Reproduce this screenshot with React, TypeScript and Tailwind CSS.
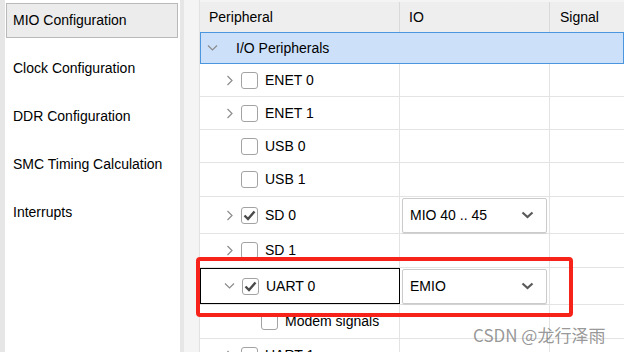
import React from "react";

const font = { fontFamily: '"Liberation Sans", Arial, sans-serif' };

function ChevronRight() {
  return (
    <svg width="8" height="11" viewBox="0 0 8 11" className="shrink-0">
      <path d="M1.5 1 L6 5.5 L1.5 10" fill="none" stroke="#8c8c8c" strokeWidth="1.2" />
    </svg>
  );
}

function ChevronDownThin() {
  return (
    <svg width="11" height="8" viewBox="0 0 11 8" className="shrink-0">
      <path d="M1 1.5 L5.5 6 L10 1.5" fill="none" stroke="#8c8c8c" strokeWidth="1.2" />
    </svg>
  );
}

function Checkbox({ checked }: { checked?: boolean }) {
  return (
    <div className="w-[17px] h-[17px] shrink-0 rounded-[3px] border-[1.5px] border-[#a3a3a3] bg-white flex items-center justify-center">
      {checked && (
        <svg width="13" height="11" viewBox="0 0 13 11">
          <path d="M1.5 5.5 L5 9 L11.5 1.5" fill="none" stroke="#4a4a4a" strokeWidth="2.4" />
        </svg>
      )}
    </div>
  );
}

function Combo({ text }: { text: string }) {
  return (
    <div className="mx-[2px] w-[145px] h-[35px] border-[1.5px] border-[#cbcbcb] rounded-[2px] bg-white flex items-center justify-between pl-[7px] pr-[12px] shadow-[0_1px_1px_rgba(0,0,0,0.08)]">
      <span className="text-[14px] text-black">{text}</span>
      <svg width="13" height="8" viewBox="0 0 13 8">
        <path d="M1.5 1.5 L6.5 6 L11.5 1.5" fill="none" stroke="#5a5a5a" strokeWidth="2.2" />
      </svg>
    </div>
  );
}

type RowProps = {
  h: string;
  indent: "top" | "sub";
  chevron?: "right" | "down" | "none";
  checked?: boolean;
  label: string;
  combo?: string;
  selected?: boolean;
};

function Row({ h, indent, chevron = "none", checked, label, combo, selected }: RowProps) {
  return (
    <div className={`flex ${h} border-b border-[#e3e3e3]`}>
      <div
        className={`w-[200px] shrink-0 flex items-center border-r ${
          selected ? "border border-black" : "border-[#e3e3e3]"
        }`}
      >
        <div className={`${indent === "top" ? "w-[41px]" : "w-[61px]"} shrink-0 flex justify-end pr-[7px]`}>
          {chevron === "right" && <ChevronRight />}
          {chevron === "down" && <ChevronDownThin />}
        </div>
        <Checkbox checked={checked} />
        <span className="ml-[7px] text-[14px] text-black whitespace-nowrap">{label}</span>
      </div>
      <div className="w-[150px] shrink-0 flex items-center border-r border-[#e3e3e3]">
        {combo && <Combo text={combo} />}
      </div>
      <div className="flex-1" />
    </div>
  );
}

export default function App() {
  const items = ["Clock Configuration", "DDR Configuration", "SMC Timing Calculation", "Interrupts"];
  return (
    <div className="relative w-[624px] h-[352px] overflow-hidden flex bg-[#f4f4f4]" style={font}>
      {/* left nav */}
      <div className="w-[184px] h-full shrink-0 bg-[#e6e6e6] pl-[5px] pr-[4px]">
        <div className="h-full bg-white pt-[3px] flex flex-col gap-[13px]">
          <div className="ml-[1px] w-[172px] h-[35px] bg-[#ececec] border border-[#b9b9b9] flex items-center pl-[6px] text-[14px] text-black">
            MIO Configuration
          </div>
          {items.map((t) => (
            <div key={t} className="h-[35px] flex items-center pl-[8px] text-[14px] text-black">
              {t}
            </div>
          ))}
        </div>
      </div>
      {/* gap */}
      <div className="w-[16px] h-full shrink-0 bg-[#f4f4f4] border-r border-[#e2e2e2]" />
      {/* table */}
      <div className="flex-1 h-full bg-white pt-[2px] bg-gradient-to-b from-[#f4f4f4] to-[#f4f4f4] bg-no-repeat bg-[length:100%_2px]">
        <div className="flex h-[30px] bg-[#eeeeee]">
          <div className="w-[200px] shrink-0 flex items-center pl-[9px] border-r border-[#dadada] text-[14px] text-black">
            Peripheral
          </div>
          <div className="w-[150px] shrink-0 flex items-center pl-[9px] border-r border-[#dadada] text-[14px] text-black">
            IO
          </div>
          <div className="flex-1 flex items-center pl-[10px] text-[14px] text-black">Signal</div>
        </div>
        <div className="flex h-[32px] bg-[#cce0fa] border border-[#4a97e0] items-center">
          <div className="w-[35px] shrink-0 flex justify-start pl-[6px]">
            <ChevronDownThin />
          </div>
          <span className="text-[14px] text-black">I/O Peripherals</span>
        </div>
        <Row h="h-[33px]" indent="top" chevron="right" label="ENET 0" />
        <Row h="h-[33px]" indent="top" chevron="right" label="ENET 1" />
        <Row h="h-[33px]" indent="top" label="USB 0" />
        <Row h="h-[34px]" indent="top" label="USB 1" />
        <Row h="h-[37px]" indent="top" chevron="right" checked label="SD 0" combo="MIO 40 .. 45" />
        <Row h="h-[34px]" indent="top" chevron="right" label="SD 1" />
        <Row h="h-[37px]" indent="top" chevron="down" checked label="UART 0" combo="EMIO" selected />
        <Row h="h-[34px]" indent="sub" label="Modem signals" />
        <Row h="h-[34px]" indent="top" chevron="right" label="UART 1" />
      </div>

      {/* red annotation */}
      <div className="absolute left-[196px] top-[257px] w-[377px] h-[60px] border-[4px] border-[#f7231b] rounded-[4px] pointer-events-none" />
      {/* watermark */}
      <div
        className="absolute left-[473px] top-[322px] text-[17px] text-[#7d7d7d]/80 whitespace-nowrap"
        style={{ fontFamily: '"Noto Sans CJK SC", "Liberation Sans", sans-serif' }}
      >
        CSDN @龙行泽雨
      </div>
    </div>
  );
}
